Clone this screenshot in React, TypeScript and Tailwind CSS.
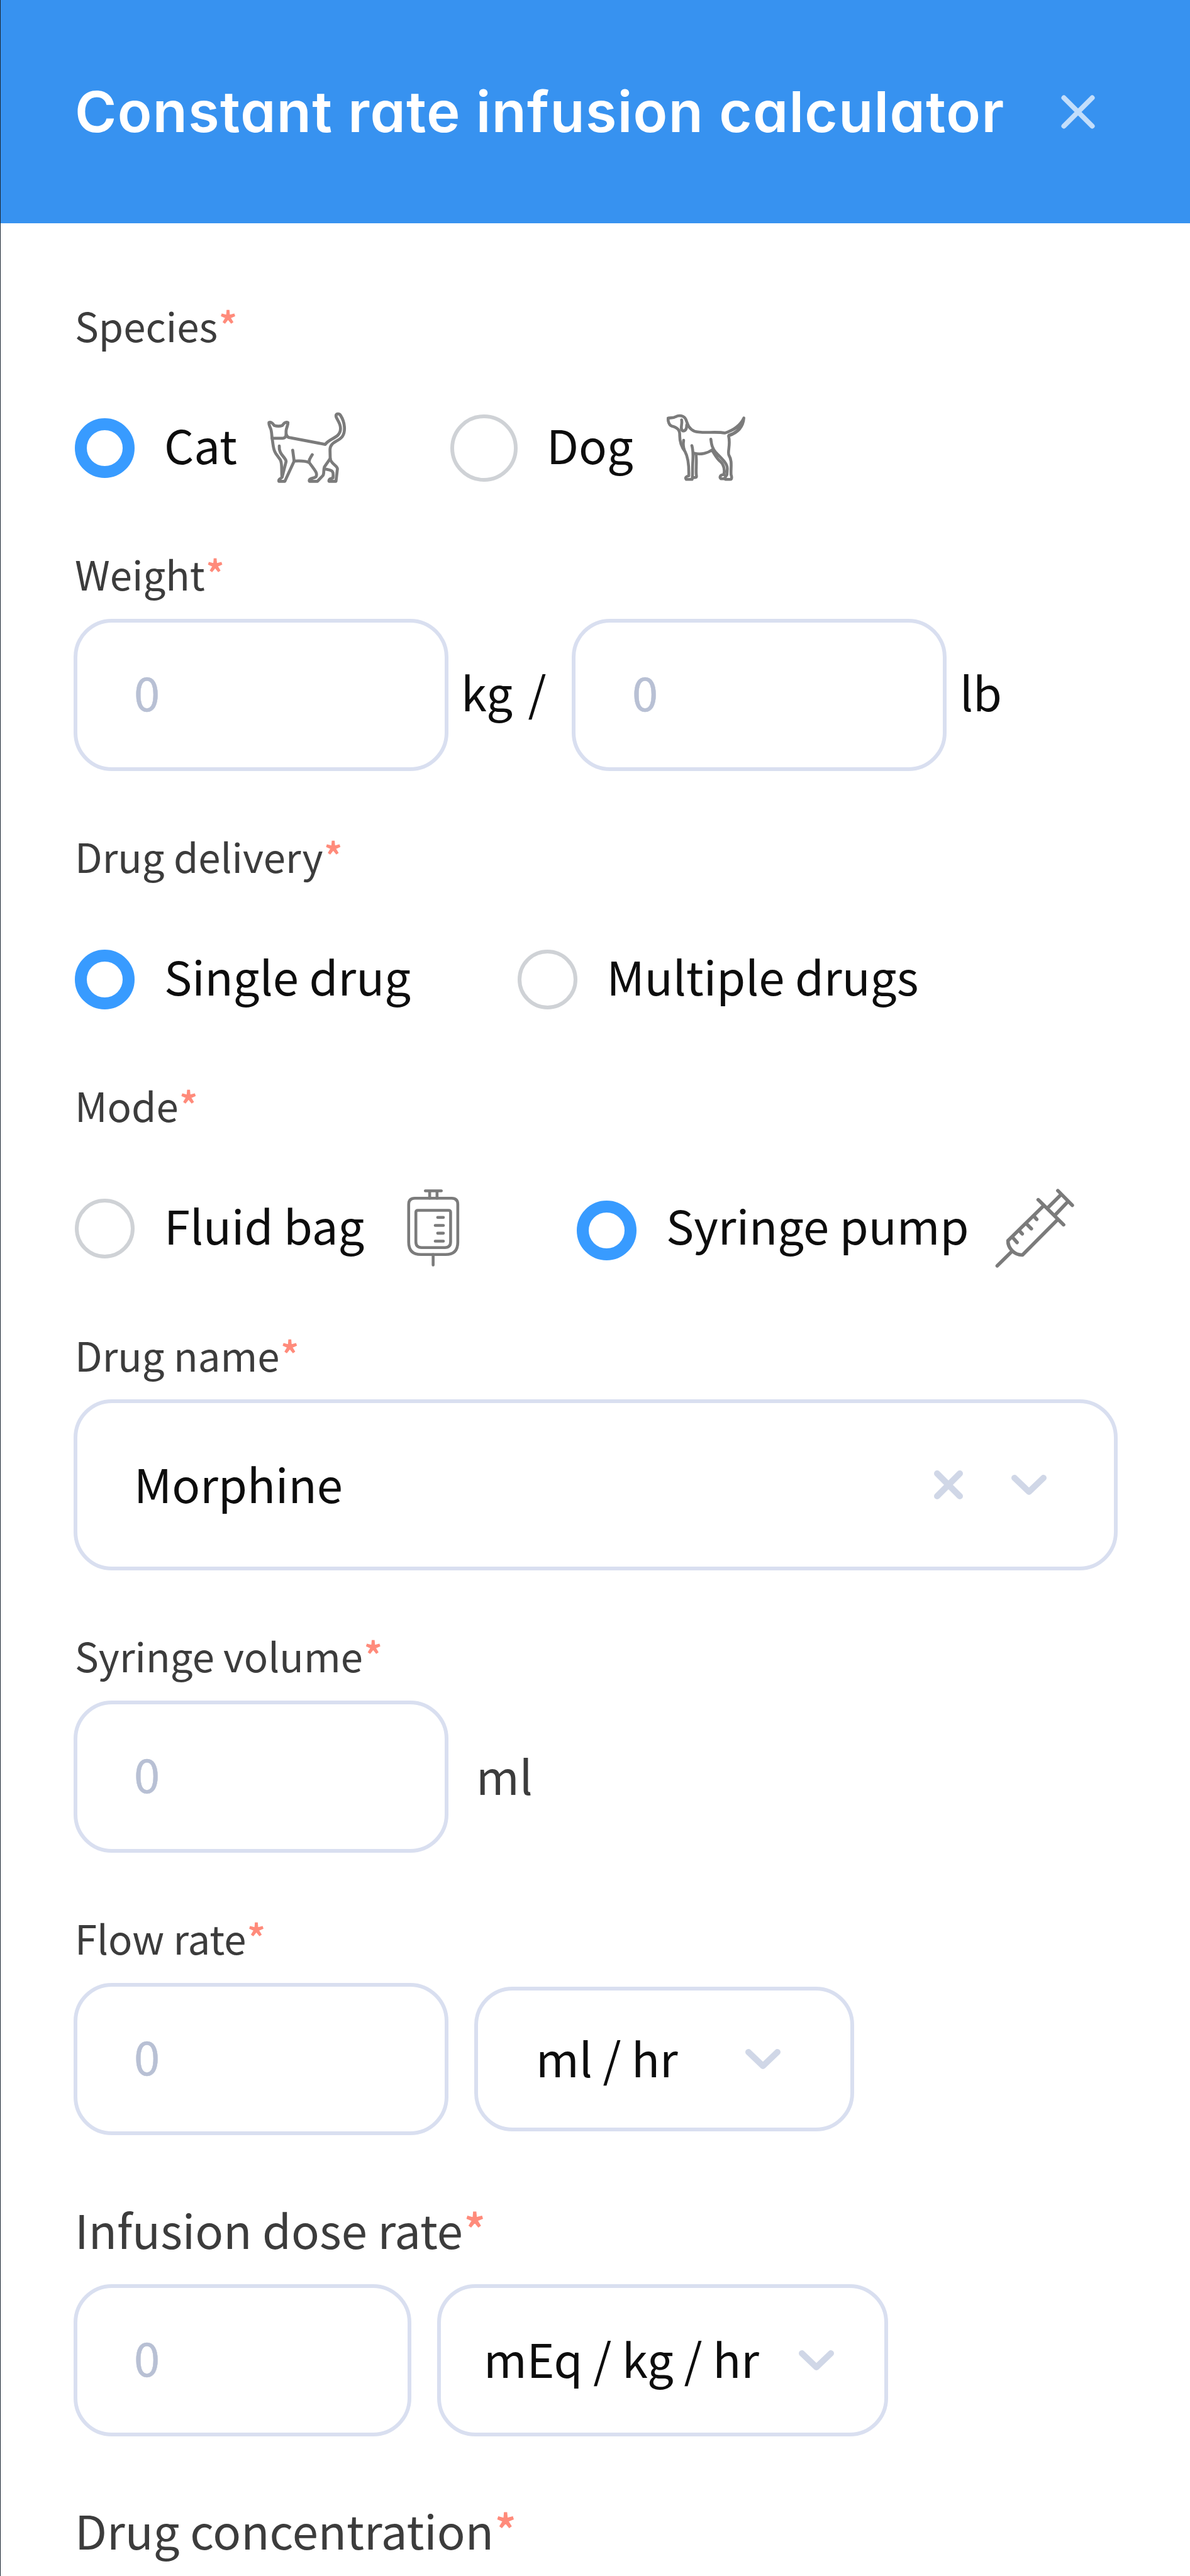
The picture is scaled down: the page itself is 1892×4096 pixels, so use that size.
import type { ReactNode } from 'react';

const ICON = 'shrink-0 fill-none stroke-[#7b7b7b]';

function CatIcon() {
  return (
    <svg viewBox="75 73.5 420 360" className={`${ICON} ml-[40px] h-[118px] w-[138px]`} strokeWidth="14.5" strokeLinecap="round" strokeLinejoin="round">
      <path d="M122 207C120 188 120 172 115 160C110 150 106 141 107 131C114 127 124 132 132 145C144 149 162 149 172 145C180 133 190 127 199 131C200 145 190 158 190 172V188C190 200 184 207 174 207Z" />
      <path d="M191 188C194 200 200 205 212 205L380 237C400 206 454 207 454 160C454 130 432 113 432 99C432 87 447 86 454 96C477 132 478 175 464 197C448 223 403 224 403 262L404 306C407 332 440 340 439 356L432 416H398C396 402 408 404 417 400C422 368 418 362 377 356" />
      <path d="M404 306L376 346C370 362 376 380 368 389L342 416H303C299 400 322 404 335 394C343 378 336 370 302 325C300 306 310 300 317 287M302 325C285 318 255 316 229 318L184 416H155C152 402 168 406 170 395C167 360 172 330 162 312L140 281C126 262 128 238 122 207" />
      <path d="M157 245C153 287 190 300 190 320L171 395M222 265L229 318" />
    </svg>
  );
}

function DogIcon() {
  return (
    <svg viewBox="45 73.5 450 360" className={`${ICON} ml-[41px] h-[118px] w-[148px]`} strokeWidth="14" strokeLinecap="round" strokeLinejoin="round">
      <path d="M88 110C98 106 112 111 124 103C140 94 165 96 174 116C184 145 190 162 215 173C250 186 325 172 362 182C405 168 436 148 455 109C452 152 428 180 381 196C392 240 374 275 383 290C400 318 391 350 393 384C398 398 396 407 390 407H366" />
      <path d="M88 110C86 126 93 144 105 148C132 155 144 165 144 190C143 230 154 252 170 272C187 303 189 350 188 390C175 391 169 400 176 407H204C208 385 205 365 207 330C209 300 211 270 203 243" />
      <path d="M223 287C228 320 221 365 225 388C227 399 221 398 208 398M163 217C160 235 160 248 167 265" />
      <path d="M153 118C159 138 142 164 160 172C176 172 178 152 178 142M215 280C245 288 280 280 304 262" />
      <path d="M295 212C298 235 300 255 320 277C345 302 376 330 375 355L373 384L360 404H345C335 400 338 384 358 384C364 362 358 335 342 321C322 305 314 285 302 268" />
      <path d="M372 180C405 172 432 154 446 132C436 158 412 180 380 190" strokeWidth="7" />
    </svg>
  );
}

function FluidBagIcon() {
  return (
    <svg viewBox="60 48 300 420" className={`${ICON} ml-[60px] h-[138px] w-[98px]`} strokeWidth="14" strokeLinecap="round" strokeLinejoin="round">
      <path d="M123 112H302Q332 112 332 142V326Q332 386 272 386H153Q93 386 93 326V142Q93 112 123 112Z" />
      <path d="M138 171H287Q297 171 297 181V324Q297 352 269 352H156Q128 352 128 324V181Q128 171 138 171Z" />
      <path d="M174 76H252M195 76V112M231 76V112M234 205H262M222 244H262M234 282H262M222 321H262M212 386V437" />
    </svg>
  );
}

function SyringeIcon() {
  return (
    <svg viewBox="30 33 450 450" className={`${ICON} ml-[32px] size-[148px]`} strokeWidth="17" strokeLinecap="round" strokeLinejoin="round">
      <path d="M364 76L434 147M378 97L314 161M412 130L350 195M269 120L392 241" />
      <path d="M292 152L123 318C122 352 152 388 193 387L360 219M142 370L71 440" />
      <path d="M249 200L262 215M214 238L236 260M180 272L192 285M148 305L167 327" />
    </svg>
  );
}

function Chevron() {
  return (
    <svg viewBox="0 0 56 33" className="h-[33px] w-[56px] shrink-0 fill-none stroke-[#d0d7e7]" strokeWidth="10" strokeLinecap="round" strokeLinejoin="round">
      <path d="M5 5L28 27L51 5" />
    </svg>
  );
}

function Label({ children, className }: { children: ReactNode; className: string }) {
  return (
    <div className={`ml-[2px] h-[92px] leading-[92px] whitespace-nowrap text-[#3c3c3c] ${className}`}>
      {children}
      <span className="ml-[1.5px] text-[#ff8b7b] [-webkit-text-stroke:1.2px_#ff8b7b]">*</span>
    </div>
  );
}

function Option({ label, checked, big, low, className = '', children }: { label: string; checked?: boolean; big?: boolean; low?: boolean; className?: string; children?: ReactNode }) {
  const size = big ? 'size-[107px] mr-[46px]' : 'size-[95px] mr-[47px]';
  const ring = checked ? 'border-[19px] border-[#389bff]' : 'border-[6px] border-[#cfd2d6]';
  return (
    <div className={`flex shrink-0 items-center ${className}`}>
      <span className={`shrink-0 rounded-full bg-white ${size} ${ring} ${low ? 'mt-[6px]' : ''}`} />
      <span className="mb-[12px] whitespace-nowrap">{label}</span>
      {children}
    </div>
  );
}

const BOX = 'flex shrink-0 items-center rounded-[61px] border-[6px] border-[#d9dff0] bg-white';

function NumberInput({ narrow }: { narrow?: boolean }) {
  return (
    <div className={`${BOX} h-[242px] pb-[12px] pl-[90px] text-[#b8c0d4] [-webkit-text-stroke:0.5px_#b8c0d4] ${narrow ? 'w-[537px]' : 'w-[596px]'}`}>0</div>
  );
}

export default function App() {
  return (
    <div className="h-[4096px] w-[1892px] overflow-hidden border-l border-[#1c2733] bg-white font-['Noto_Sans_CJK_SC',sans-serif] text-[74.2px] leading-[108px] text-[#0d0d0d]">
      <header className="flex h-[355px] items-center bg-[#3792f0] pl-[118px]">
        <h1 className="w-[1568px] font-['Inter',sans-serif] text-[90px] font-semibold tracking-[1.35px] whitespace-nowrap text-white [font-feature-settings:'cv11']">
          Constant rate infusion calculator
        </h1>
        <svg viewBox="0 0 54 54" className="size-[54px] fill-none stroke-[#c3defb]" strokeWidth="8" strokeLinecap="round">
          <path d="M4.5 4.5L49.5 49.5M49.5 4.5L4.5 49.5" />
        </svg>
      </header>

      <main className="pt-[115px] pl-[116px]">
        <Label className="text-[63.5px]">Species</Label>
        <div className="mt-[90px] ml-[2px] flex h-[120px] items-center">
          <Option label="Cat" checked className="w-[597px]"><CatIcon /></Option>
          <Option label="Dog" big><DogIcon /></Option>
        </div>

        <Label className="mt-[93px] text-[63.5px]">Weight</Label>
        <div className="mt-[27px] flex items-center">
          <NumberInput />
          <span className="w-[196px] pb-[12px] pl-[20px] whitespace-nowrap [word-spacing:8px]">kg /</span>
          <NumberInput />
          <span className="pb-[12px] pl-[21px]">lb</span>
        </div>

        <Label className="mt-[88px] text-[63.5px]">Drug delivery</Label>
        <div className="mt-[91px] ml-[2px] flex h-[120px] items-center">
          <Option label="Single drug" checked className="w-[703.5px]" />
          <Option label="Multiple drugs" />
        </div>

        <Label className="mt-[93px] text-[63.5px]">Mode</Label>
        <div className="mt-[91px] ml-[2px] flex h-[120px] items-center">
          <Option label="Fluid bag" className="w-[798px]"><FluidBagIcon /></Option>
          <Option label="Syringe pump" checked low><SyringeIcon /></Option>
        </div>

        <Label className="mt-[94px] text-[63.5px]">Drug name</Label>
        <div className={`${BOX} mt-[26px] h-[272px] w-[1660px] pr-[107px] pl-[90px]`}>
          <span className="flex-1 pb-[6px]">Morphine</span>
          <svg viewBox="0 0 46 46" className="mr-[77px] size-[46px] fill-none stroke-[#d0d7e7]" strokeWidth="10" strokeLinecap="round">
            <path d="M5 5L41 41M41 5L5 41" />
          </svg>
          <Chevron />
        </div>

        <Label className="mt-[88px] text-[63.5px]">Syringe volume</Label>
        <div className="mt-[27px] flex items-center">
          <NumberInput />
          <span className="pb-[6px] pl-[44px] text-[#3c3c3c]">ml</span>
        </div>

        <Label className="mt-[88px] text-[63.5px]">Flow rate</Label>
        <div className="mt-[27px] flex items-center">
          <NumberInput />
          <div className={`${BOX} ml-[41px] h-[230px] w-[604px] justify-between pr-[111px] pl-[92px]`}>
            <span className="pb-[6px] whitespace-nowrap">ml / hr</span>
            <Chevron />
          </div>
        </div>

        <Label className="mt-[103px] text-[74.2px]">Infusion dose rate</Label>
        <div className="mt-[42px] flex items-center">
          <NumberInput narrow />
          <div className={`${BOX} ml-[41px] h-[242px] w-[717px] justify-between pr-[80px] pl-[68px]`}>
            <span className="pb-[8px] whitespace-nowrap">mEq / kg / hr</span>
            <Chevron />
          </div>
        </div>

        <Label className="mt-[102px] text-[74.2px]">Drug concentration</Label>
      </main>
    </div>
  );
}
